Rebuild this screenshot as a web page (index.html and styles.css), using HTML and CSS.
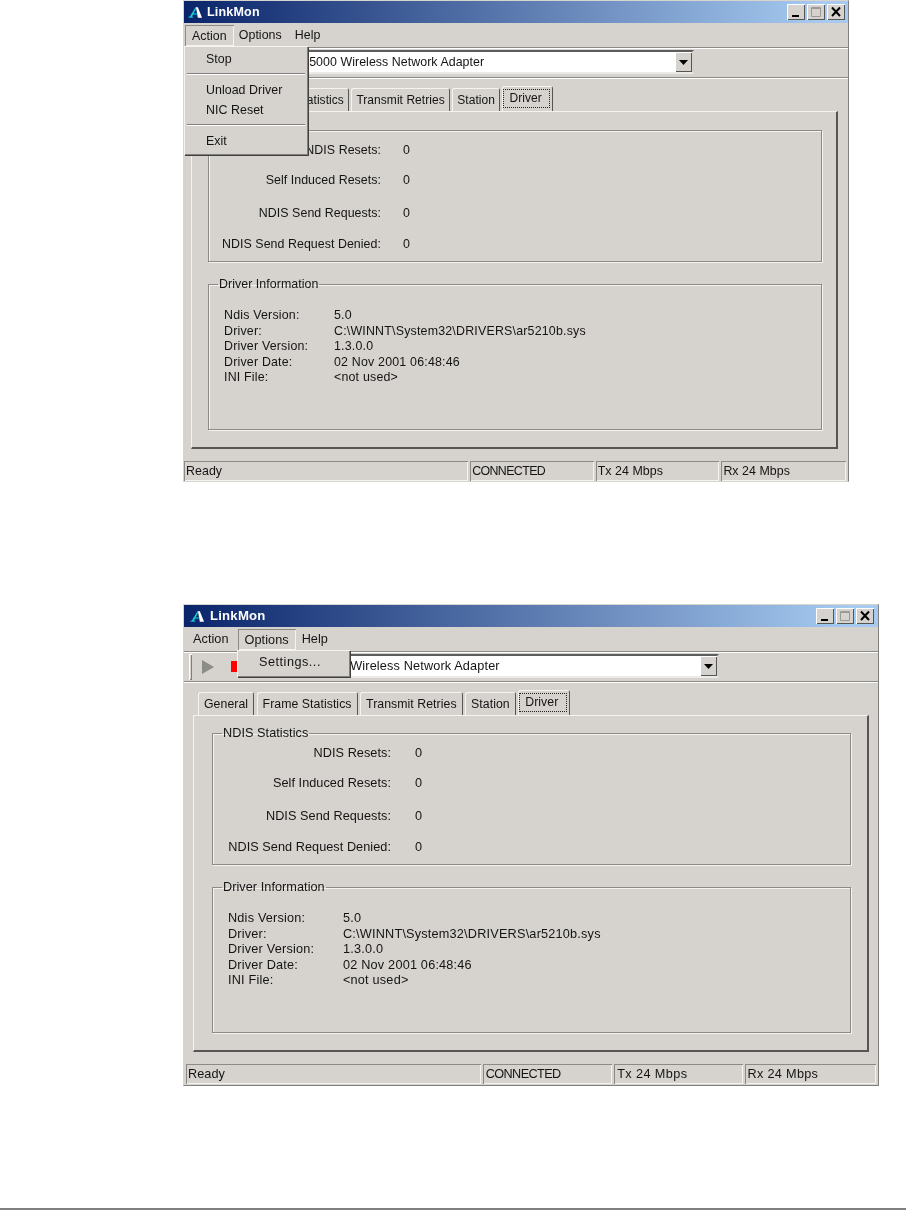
FILE: index.html
```html
<!DOCTYPE html>
<html lang="en">
<head>
<meta charset="utf-8">
<title>LinkMon</title>
<link rel="stylesheet" href="styles.css">
</head>
<body>
<main class="page">
  <section class="win win-a">
    <header class="title">
      <svg class="logo" viewBox="0 0 16 16"><polygon points="8,3 9.500,3 4,13.500 1.500,13.500" fill="#18c8d8"/><polygon points="8.500,3 10.500,3 15,14 10.500,14" fill="#fff"/><rect x="0.500" y="13" width="5" height="1" fill="#18c8d8"/><rect x="4" y="9.500" width="6" height="1.200" fill="#18c8d8"/></svg>
      <span class="title-text">LinkMon</span>
      <div class="caption">
        <span class="cap-btn"><svg viewBox="0 0 18 16"><rect x="5" y="11" width="7" height="2" fill="#000"/></svg></span>
        <span class="cap-btn cap-max"><svg viewBox="0 0 18 16"><path d="M4.500 3.500h9v9h-9zM4.500 4.500h9" fill="none" stroke="#9a9a94"/></svg></span>
        <span class="cap-btn cap-close"><svg viewBox="0 0 18 16"><path d="M5 3.500l8 8.500M13 3.500l-8 8.500" stroke="#000" stroke-width="2" fill="none"/></svg></span>
      </div>
    </header>
    <nav class="menubar">
      <span class="menu-item is-open">Action</span><span class="menu-item">Options</span><span class="menu-item">Help</span>
    </nav>
    <div class="popup popup-action">
      <div class="pop-row">Stop</div>
      <div class="pop-sep"></div>
      <div class="pop-row">Unload Driver</div>
      <div class="pop-row">NIC Reset</div>
      <div class="pop-sep"></div>
      <div class="pop-row">Exit</div>
    </div>
    <div class="toolbar">
      <span class="grip"></span>
      <svg class="play" viewBox="0 0 12 14"><polygon points="0,0 12,7 0,14" fill="#8c8c88"/></svg>
      <span class="stop"></span>
      <div class="combo"><span class="combo-text">Atheros AR5000 Wireless Network Adapter</span><span class="combo-btn"><svg viewBox="0 0 9 5"><polygon points="0,0 9,0 4.500,5" fill="#000"/></svg></span></div>
    </div>
    <div class="tabs">
      <span class="tab">General</span><span class="tab">Frame Statistics</span><span class="tab">Transmit Retries</span><span class="tab">Station</span><span class="tab is-active"><span class="focus">Driver</span></span>
    </div>
    <div class="panel">
      <fieldset class="group group-stats">
        <legend>NDIS Statistics</legend>
        <div class="stats">
          <span class="lab">NDIS Resets:</span><span>0</span>
          <span class="lab">Self Induced Resets:</span><span>0</span>
          <span class="lab">NDIS Send Requests:</span><span>0</span>
          <span class="lab">NDIS Send Request Denied:</span><span>0</span>
        </div>
      </fieldset>
      <fieldset class="group group-info">
        <legend>Driver Information</legend>
        <div class="info">
          <span>Ndis Version:</span><span>5.0</span>
          <span>Driver:</span><span>C:\WINNT\System32\DRIVERS\ar5210b.sys</span>
          <span>Driver Version:</span><span>1.3.0.0</span>
          <span>Driver Date:</span><span>02 Nov 2001 06:48:46</span>
          <span>INI File:</span><span>&lt;not used&gt;</span>
        </div>
      </fieldset>
    </div>
    <footer class="status">
      <span class="cell cell-ready">Ready</span><span class="cell cell-conn">CONNECTED</span><span class="cell cell-tx">Tx 24 Mbps</span><span class="cell cell-rx">Rx 24 Mbps</span>
    </footer>
  </section>

  <section class="win win-b">
    <header class="title">
      <svg class="logo" viewBox="0 0 16 16"><polygon points="8,3 9.500,3 4,13.500 1.500,13.500" fill="#18c8d8"/><polygon points="8.500,3 10.500,3 15,14 10.500,14" fill="#fff"/><rect x="0.500" y="13" width="5" height="1" fill="#18c8d8"/><rect x="4" y="9.500" width="6" height="1.200" fill="#18c8d8"/></svg>
      <span class="title-text">LinkMon</span>
      <div class="caption">
        <span class="cap-btn"><svg viewBox="0 0 18 16"><rect x="5" y="11" width="7" height="2" fill="#000"/></svg></span>
        <span class="cap-btn cap-max"><svg viewBox="0 0 18 16"><path d="M4.500 3.500h9v9h-9zM4.500 4.500h9" fill="none" stroke="#9a9a94"/></svg></span>
        <span class="cap-btn cap-close"><svg viewBox="0 0 18 16"><path d="M5 3.500l8 8.500M13 3.500l-8 8.500" stroke="#000" stroke-width="2" fill="none"/></svg></span>
      </div>
    </header>
    <nav class="menubar">
      <span class="menu-item">Action</span><span class="menu-item is-open">Options</span><span class="menu-item">Help</span>
    </nav>
    <div class="popup popup-options">
      <div class="pop-row">Settings...</div>
    </div>
    <div class="toolbar">
      <span class="grip"></span>
      <svg class="play" viewBox="0 0 12 14"><polygon points="0,0 12,7 0,14" fill="#8c8c88"/></svg>
      <span class="stop"></span>
      <div class="combo"><span class="combo-text">Atheros AR5000 Wireless Network Adapter</span><span class="combo-btn"><svg viewBox="0 0 9 5"><polygon points="0,0 9,0 4.500,5" fill="#000"/></svg></span></div>
    </div>
    <div class="tabs">
      <span class="tab">General</span><span class="tab">Frame Statistics</span><span class="tab">Transmit Retries</span><span class="tab">Station</span><span class="tab is-active"><span class="focus">Driver</span></span>
    </div>
    <div class="panel">
      <fieldset class="group group-stats">
        <legend>NDIS Statistics</legend>
        <div class="stats">
          <span class="lab">NDIS Resets:</span><span>0</span>
          <span class="lab">Self Induced Resets:</span><span>0</span>
          <span class="lab">NDIS Send Requests:</span><span>0</span>
          <span class="lab">NDIS Send Request Denied:</span><span>0</span>
        </div>
      </fieldset>
      <fieldset class="group group-info">
        <legend>Driver Information</legend>
        <div class="info">
          <span>Ndis Version:</span><span>5.0</span>
          <span>Driver:</span><span>C:\WINNT\System32\DRIVERS\ar5210b.sys</span>
          <span>Driver Version:</span><span>1.3.0.0</span>
          <span>Driver Date:</span><span>02 Nov 2001 06:48:46</span>
          <span>INI File:</span><span>&lt;not used&gt;</span>
        </div>
      </fieldset>
    </div>
    <footer class="status">
      <span class="cell cell-ready">Ready</span><span class="cell cell-conn">CONNECTED</span><span class="cell cell-tx">Tx 24 Mbps</span><span class="cell cell-rx">Rx 24 Mbps</span>
    </footer>
  </section>

  <div class="rule"></div>
</main>
</body>
</html>
```

FILE: styles.css
```css
* { box-sizing: border-box; }
html, body { margin: 0; padding: 0; background: #fff; }
.page {
  height: 1210px;
  display: flex;
  flex-direction: column;
  overflow: hidden;
  font-family: "Liberation Sans", Arial, sans-serif;
  color: #141414;
}
.win {
  position: relative;
  margin-left: 183px;
  display: flex;
  flex-direction: column;
  background: #d6d3ce;
  border: 1px solid #d8d5ce;
  border-right-color: #808080;
  font-size: var(--fs);
  line-height: 16px;
  letter-spacing: .05px;
  filter: blur(.3px);
}
.win > * { flex: none; }
.win-a {
  --fs: 12.4px;
  --tab-fs: 12px;
  --tab-pad: 5px;
  --tab-gap: 2.5px;
  --tabs-left: 12.5px;
  --focus-left: 5px;
  --focus-right: 7px;
  --cap-right: 3px;
  width: 666px;
  height: 482px;
  --combo-left: 243px;
  --combo-width: 451px;
  --combo-pad: 1px;
  --label-col: 172px;
  --stat-gap: 22px;
  --value-col: 110px;
  --group-w: 614px;
}
.win-b {
  --fs: 12.7px;
  --tab-fs: 12.3px;
  --tab-pad: 6px;
  --tab-gap: 2.5px;
  --tabs-left: 14px;
  --focus-left: 5px;
  --focus-right: 8px;
  --cap-right: 4px;
  width: 696px;
  height: 482px;
  margin-top: 122px;
  --combo-left: 242px;
  --combo-width: 477px;
  --combo-pad: 8px;
  --label-col: 178px;
  --stat-gap: 24px;
  --value-col: 115px;
  --group-w: 639px;
  border-bottom-color: #808080;
}

/* Title bar */
.title {
  height: 22px;
  display: flex;
  align-items: center;
  padding-left: 4px;
  background: linear-gradient(90deg, #0a246a 0%, #a6caf0 96%, #a6caf0 100%);
  color: #fff;
}
.win-b .title { padding-left: 6px; }
.logo { width: 15px; height: 16px; }
.title-text { margin-left: 4px; font-weight: bold; font-size: 12.5px; letter-spacing: .2px; }
.win-b .title-text { margin-left: 5px; font-size: 13.2px; }
.caption { margin-left: auto; margin-right: var(--cap-right); display: flex; gap: 2px; }
.cap-btn {
  width: 18px;
  height: 16px;
  background: #d6d3ce;
  box-shadow: inset 1px 1px 0 #fff, inset -1px -1px 0 #555;
  display: block;
}
.cap-btn svg { display: block; width: 18px; height: 16px; }

/* Menu */
.menubar {
  height: 24px;
  display: flex;
  align-items: center;
  padding: 1px 0 0 1px;
}
.menu-item { padding: 0 7px; height: 21px; line-height: 21px; }
.win-a .menu-item:nth-child(2) { margin-left: -2px; }
.win-a .menu-item:nth-child(3) { margin-left: -1px; }
.win-b .menubar { padding-left: 2px; }
.win-b .menu-item:nth-child(2) { margin-left: 2px; }
.win-b .menu-item:nth-child(3) { margin-left: -1px; }
.menu-item.is-open { line-height: 23px; box-shadow: inset 1px 1px 0 #8c8a85, inset -1px -1px 0 #f4f3f0; }
.popup {
  position: absolute;
  z-index: 5;
  background: #d6d3ce;
  box-shadow: inset 1px 1px 0 #f4f3f0, inset -1px -1px 0 #808080, 1px 1px 0 #404040;
}
.popup-action { left: 0; top: 45px; width: 124px; height: 109px; padding-top: 5px; }
.popup-options { left: 53px; top: 45px; width: 113px; height: 27px; padding-top: 4px; }
.pop-row { padding-left: 22px; height: 20px; line-height: 16px; }
.popup-options .pop-row { letter-spacing: .5px; }
.pop-sep { height: 2px; margin: 2px 3px 7px; background: #808080; border-bottom: 1px solid #fff; }

/* Toolbar */
.toolbar {
  position: relative;
  height: 31px;
  display: flex;
  align-items: center;
  border-top: 1px solid #8c8a85;
  border-bottom: 1px solid #8c8a85;
  box-shadow: inset 0 1px 0 #fff, 0 1px 0 #fff;
}
.grip {
  width: 3px;
  height: 26px;
  margin-left: 5px;
  background: #d6d3ce;
  box-shadow: inset 1px 1px 0 #fff, inset -1px -1px 0 #808080;
}
.play { width: 12px; height: 14px; margin-left: 10px; }
.stop { width: 8px; height: 11px; margin-left: 17px; background: #f00; }
.combo {
  position: absolute;
  left: calc(var(--combo-left) - 184px);
  top: 2px;
  width: var(--combo-width);
  height: 24px;
  background: #fff;
  border: 2px solid #5c5c5c;
  border-right-color: #d6d3ce;
  border-bottom-color: #ecebe7;
  display: flex;
  align-items: center;
  padding-left: var(--combo-pad);
  white-space: nowrap;
}
.win-b .combo-text { letter-spacing: .15px; }
.combo-text { flex: 1; overflow: hidden; }
.combo-btn {
  width: 17px;
  height: 20px;
  background: #d6d3ce;
  box-shadow: inset 1px 1px 0 #fff, inset -1px -1px 0 #555;
  display: flex;
  align-items: center;
  justify-content: center;
}
.combo-btn svg { width: 9px; height: 5px; }

/* Tabs */
.tabs {
  height: 33px;
  padding: 10px 0 0 var(--tabs-left);
  display: flex;
  align-items: flex-end;
  font-size: var(--tab-fs);
}
.tab {
  height: 23px;
  line-height: 24px;
  margin-right: var(--tab-gap);
  padding: 0 var(--tab-pad);
  box-shadow: inset 1px 1px 0 #f4f3f0, inset -1px 0 0 #555;
  border-radius: 2px 2px 0 0;
  white-space: nowrap;
}
.tab.is-active {
  height: 25px;
  padding: 3px 3px 0 1px;
  position: relative;
  z-index: 1;
  background: #d6d3ce;
  line-height: 16px;
}
.focus { display: block; border: 1px dotted #222; padding: 0 var(--focus-right) 0 var(--focus-left); height: 19px; }

/* Panel */
.panel {
  margin-left: 7px;
  height: 338px;
  margin-right: 10px;
  border-top: 1px solid #f4f3f0;
  border-left: 1px solid #f4f3f0;
  border-right: 2px solid #555;
  border-bottom: 2px solid #555;
  padding: 17px 0 0 16px;
}
.win-b .panel { margin-left: 9px; padding: 16px 0 0 18px; margin-right: 9px; height: 337px; }
.group {
  width: var(--group-w);
  margin: 0;
  padding: 0;
  border: 1px solid #8c8a85;
  box-shadow: inset 1px 1px 0 #f4f3f0, 1px 1px 0 #f4f3f0;
  min-width: 0;
}
.group legend { margin-left: 9px; padding: 0 1px; line-height: 14px; }
.group-stats { height: 139px; margin-top: -6px; }
.group-info { height: 153px; margin-top: 15px; }
.stats {
  display: grid;
  grid-template-columns: var(--label-col) auto;
  grid-template-rows: 30px 33px 31px 16px;
  column-gap: var(--stat-gap);
  justify-content: start;
  padding-top: 5px;
  line-height: 16px;
}
.lab { text-align: right; }
.info {
  display: grid;
  grid-template-columns: var(--value-col) auto;
  grid-auto-rows: 15.6px;
  justify-content: start;
  padding: 17px 0 0 15px;
  line-height: 15.6px;
  letter-spacing: .2px;
}

/* Status */
.status {
  margin-top: 12px;
  height: 20px;
  display: flex;
  gap: 2px;
  padding: 0 2px 0 0;
}
.cell {
  height: 20px;
  padding-left: 2px;
  line-height: 20px;
  box-shadow: inset 1px 1px 0 #8c8a85, inset -1px -1px 0 #f4f3f0;
}
.cell-conn { letter-spacing: -.6px; }
.win-a .cell-ready { width: 285px; }
.win-a .cell-conn { width: 124px; }
.win-a .cell-tx { width: 124px; }
.win-a .cell-rx { width: 125px; }
.win-b .status { margin-left: 2px; }
.win-b .cell-ready { width: 296px; }
.win-b .cell-conn { width: 130px; padding-left: 3px; }
.win-b .cell-tx { width: 129px; padding-left: 3px; letter-spacing: .4px; }
.win-b .cell-rx { width: 132px; padding-left: 3px; letter-spacing: .3px; }

.rule {
  margin-top: auto;
  height: 2px;
  background: #808080;
  flex: none;
}
```
